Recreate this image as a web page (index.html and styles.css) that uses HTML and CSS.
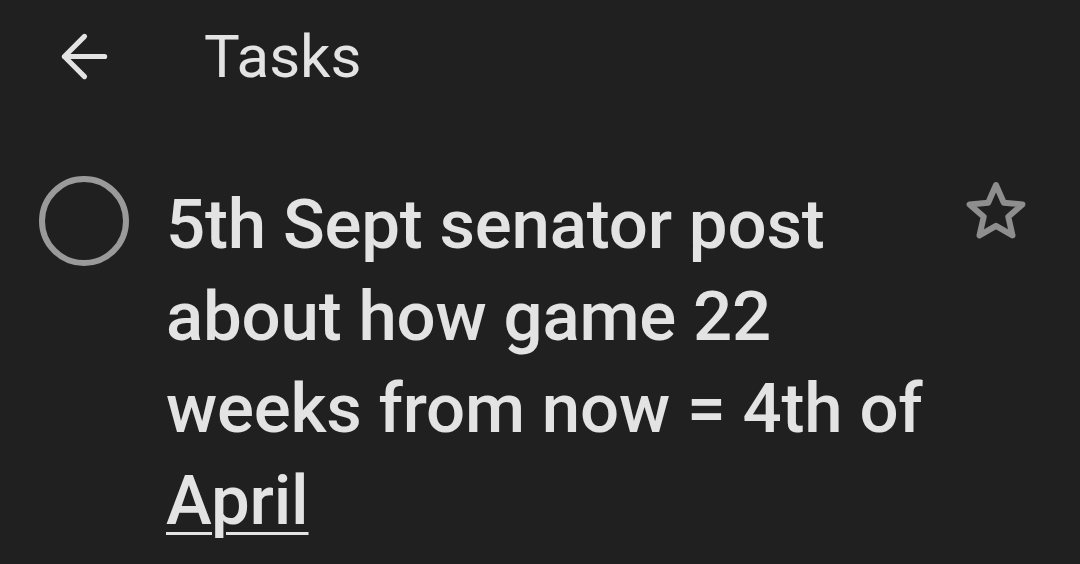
FILE: index.html
```html
<!DOCTYPE html>
<html lang="en">
<head>
    <meta charset="utf-8">
    <title>Tasks</title>
    <link rel="stylesheet" href="styles.css">
</head>
<body>
    <header class="top-bar">
        <svg class="back-icon" viewBox="0 0 24 24" width="69" height="69">
            <path d="M19 12H5M12 5l-7 7 7 7" />
        </svg>
        <h1 class="title">Tasks</h1>
    </header>

    <div class="task">
        <span class="check"></span>
        <p class="task-text">5th Sept senator post about how game 22 weeks from now = 4th of <u>April</u></p>
        <svg class="star-icon" viewBox="0 0 24 24" width="72" height="72">
            <polygon points="12,3 14.6,8.9 20.8,9.5 16.1,13.6 17.5,19.8 12,16.6 6.5,19.8 7.9,13.6 3.2,9.5 9.4,8.9" />
        </svg>
    </div>
</body>
</html>
```

FILE: styles.css
```css
body {
    margin: 0;
    background-color: #202020;
    color: #e3e3e3;
    font-family: Roboto, "Noto Sans", sans-serif;
}

.top-bar {
    display: flex;
    align-items: center;
    height: 112px;
}

.back-icon {
    margin-left: 50px;
    fill: none;
    stroke: #e3e3e3;
    stroke-width: 1.8;
    stroke-linecap: round;
    stroke-linejoin: round;
}

.title {
    margin: 0 0 0 85px;
    font-size: 60px;
    font-weight: 400;
}

.task {
    display: flex;
    align-items: flex-start;
    padding-top: 64px;
}

.check {
    flex: none;
    width: 90px;
    height: 90px;
    margin-left: 39px;
    box-sizing: border-box;
    border: 6px solid #9a9a9a;
    border-radius: 50%;
}

.task-text {
    width: 780px;
    margin: 3px 0 0 37px;
    font-size: 69px;
    font-weight: 500;
    line-height: 92px;
    letter-spacing: -0.2px;
}

.task-text u {
    text-decoration-thickness: 3px;
    text-underline-offset: 8px;
}

.star-icon {
    flex: none;
    margin: 0 48px 0 auto;
    fill: none;
    stroke: #8e8e8e;
    stroke-width: 2;
    stroke-linejoin: round;
}
```
